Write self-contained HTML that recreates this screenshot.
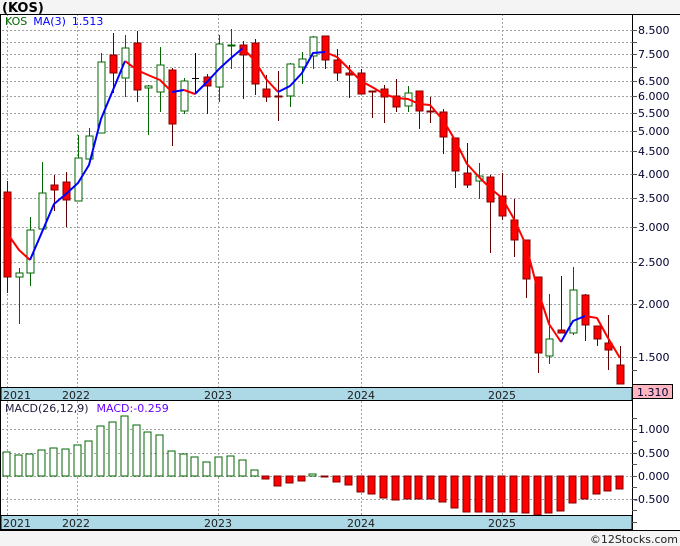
<!DOCTYPE html>
<html><head><meta charset="utf-8"><style>
html,body{margin:0;padding:0;background:#f4f4f4;}
svg{display:block;font-family:"DejaVu Sans","Liberation Sans",sans-serif;}
</style></head><body>
<svg width="680" height="546" viewBox="0 0 680 546" xmlns="http://www.w3.org/2000/svg">
<rect x="0" y="0" width="680" height="546" fill="#f4f4f4"/>
<text x="2" y="12" font-size="13" font-weight="bold" fill="#000">(KOS)</text>
<rect x="0" y="14" width="680" height="516" fill="#fff"/>
<g stroke="#a0a0a0" stroke-dasharray="2,2" stroke-width="1">
<line x1="2" x2="632" y1="30.5" y2="30.5"/><line x1="2" x2="632" y1="42.5" y2="42.5"/><line x1="2" x2="632" y1="54.5" y2="54.5"/><line x1="2" x2="632" y1="67.5" y2="67.5"/><line x1="2" x2="632" y1="81.5" y2="81.5"/><line x1="2" x2="632" y1="96.5" y2="96.5"/><line x1="2" x2="632" y1="113.5" y2="113.5"/><line x1="2" x2="632" y1="131.5" y2="131.5"/><line x1="2" x2="632" y1="151.5" y2="151.5"/><line x1="2" x2="632" y1="174.5" y2="174.5"/><line x1="2" x2="632" y1="198.5" y2="198.5"/><line x1="2" x2="632" y1="227.5" y2="227.5"/><line x1="2" x2="632" y1="262.5" y2="262.5"/><line x1="2" x2="632" y1="304.5" y2="304.5"/><line x1="2" x2="632" y1="357.5" y2="357.5"/>
<line x1="2" x2="632" y1="429.5" y2="429.5"/><line x1="2" x2="632" y1="453.5" y2="453.5"/><line x1="2" x2="632" y1="476.5" y2="476.5"/><line x1="2" x2="632" y1="499.5" y2="499.5"/>
<line x1="7.5" x2="7.5" y1="14" y2="387"/><line x1="77.5" x2="77.5" y1="14" y2="387"/><line x1="218.5" x2="218.5" y1="14" y2="387"/><line x1="361.5" x2="361.5" y1="14" y2="387"/><line x1="502.5" x2="502.5" y1="14" y2="387"/>
<line x1="7.5" x2="7.5" y1="401" y2="515"/><line x1="77.5" x2="77.5" y1="401" y2="515"/><line x1="218.5" x2="218.5" y1="401" y2="515"/><line x1="361.5" x2="361.5" y1="401" y2="515"/><line x1="502.5" x2="502.5" y1="401" y2="515"/>
</g>
<text x="5" y="25" font-size="11"><tspan fill="#006400">KOS</tspan><tspan fill="#0000ff" dx="6">MA(3)</tspan><tspan fill="#0000ff" dx="6">1.513</tspan></text>
<text x="5" y="412" font-size="11"><tspan fill="#202040">MACD(26,12,9)</tspan><tspan fill="#6600ff" dx="8">MACD:-0.259</tspan></text>
<g stroke-width="1">
<g stroke="#600000"><line x1="7.5" x2="7.5" y1="181" y2="293"/><line x1="54.5" x2="54.5" y1="175" y2="211"/><line x1="66.5" x2="66.5" y1="172" y2="227"/><line x1="113.5" x2="113.5" y1="33" y2="93"/><line x1="137.5" x2="137.5" y1="31" y2="102"/><line x1="172.5" x2="172.5" y1="68" y2="146"/><line x1="207.5" x2="207.5" y1="74" y2="114"/><line x1="243.5" x2="243.5" y1="41" y2="99"/><line x1="255.5" x2="255.5" y1="39" y2="95"/><line x1="266.5" x2="266.5" y1="75" y2="102"/><line x1="278.5" x2="278.5" y1="71" y2="121"/><line x1="325.5" x2="325.5" y1="36" y2="69"/><line x1="337.5" x2="337.5" y1="49" y2="81"/><line x1="349.5" x2="349.5" y1="65" y2="98"/><line x1="361.5" x2="361.5" y1="69" y2="94"/><line x1="372.5" x2="372.5" y1="91" y2="118"/><line x1="384.5" x2="384.5" y1="85" y2="123"/><line x1="396.5" x2="396.5" y1="79" y2="112"/><line x1="419.5" x2="419.5" y1="91" y2="129"/><line x1="430.5" x2="430.5" y1="97" y2="123"/><line x1="443.5" x2="443.5" y1="109" y2="154"/><line x1="455.5" x2="455.5" y1="138" y2="188"/><line x1="467.5" x2="467.5" y1="143" y2="188"/><line x1="490.5" x2="490.5" y1="175" y2="253"/><line x1="502.5" x2="502.5" y1="173" y2="220"/><line x1="514.5" x2="514.5" y1="199" y2="257"/><line x1="526.5" x2="526.5" y1="240" y2="298"/><line x1="538.5" x2="538.5" y1="277" y2="373"/><line x1="561.5" x2="561.5" y1="276" y2="333"/><line x1="585.5" x2="585.5" y1="294" y2="341"/><line x1="597.5" x2="597.5" y1="326" y2="346"/><line x1="608.5" x2="608.5" y1="315" y2="370"/><line x1="620.5" x2="620.5" y1="346" y2="384"/></g>
<g stroke="#006400"><line x1="19.5" x2="19.5" y1="268" y2="324"/><line x1="30.5" x2="30.5" y1="217" y2="286"/><line x1="42.5" x2="42.5" y1="162" y2="229"/><line x1="78.5" x2="78.5" y1="135" y2="201"/><line x1="89.5" x2="89.5" y1="128" y2="159"/><line x1="101.5" x2="101.5" y1="53" y2="133"/><line x1="125.5" x2="125.5" y1="35" y2="97"/><line x1="148.5" x2="148.5" y1="85" y2="135"/><line x1="160.5" x2="160.5" y1="47" y2="112"/><line x1="184.5" x2="184.5" y1="78" y2="114"/><line x1="219.5" x2="219.5" y1="35" y2="102"/><line x1="231.5" x2="231.5" y1="29" y2="69"/><line x1="290.5" x2="290.5" y1="63" y2="107"/><line x1="302.5" x2="302.5" y1="52" y2="84"/><line x1="313.5" x2="313.5" y1="36" y2="69"/><line x1="408.5" x2="408.5" y1="86" y2="112"/><line x1="479.5" x2="479.5" y1="163" y2="199"/><line x1="549.5" x2="549.5" y1="294" y2="364"/><line x1="573.5" x2="573.5" y1="267" y2="335"/></g>
<line x1="195.5" x2="195.5" y1="53" y2="93" stroke="#000"/><line x1="192" x2="199" y1="78.5" y2="78.5" stroke="#000"/>
<g fill="#ff0000" stroke="#800000"><rect x="4" y="192" width="7" height="85"/><rect x="51" y="185" width="7" height="5"/><rect x="63" y="182" width="7" height="18"/><rect x="110" y="55" width="7" height="18"/><rect x="134" y="43" width="7" height="47"/><rect x="169" y="70" width="7" height="54"/><rect x="204" y="77" width="7" height="9"/><rect x="240" y="45" width="7" height="10"/><rect x="252" y="43" width="7" height="41"/><rect x="263" y="89" width="7" height="8"/><rect x="275" y="96" width="7" height="1"/><rect x="322" y="36" width="7" height="24"/><rect x="334" y="60" width="7" height="13"/><rect x="346" y="73" width="7" height="2"/><rect x="358" y="73" width="7" height="21"/><rect x="369" y="91" width="7" height="1"/><rect x="381" y="89" width="7" height="8"/><rect x="393" y="96" width="7" height="11"/><rect x="416" y="91" width="7" height="20"/><rect x="427" y="111" width="7" height="1"/><rect x="440" y="112" width="7" height="25"/><rect x="452" y="138" width="7" height="33"/><rect x="464" y="173" width="7" height="12"/><rect x="487" y="177" width="7" height="25"/><rect x="499" y="196" width="7" height="20"/><rect x="511" y="220" width="7" height="20"/><rect x="523" y="240" width="7" height="39"/><rect x="535" y="277" width="7" height="76"/><rect x="558" y="330" width="7" height="3"/><rect x="582" y="295" width="7" height="30"/><rect x="594" y="326" width="7" height="13"/><rect x="605" y="343" width="7" height="7"/><rect x="617" y="365" width="7" height="19"/></g>
<g fill="#fff" stroke="#006400"><rect x="16" y="273" width="7" height="4"/><rect x="27" y="230" width="7" height="43"/><rect x="39" y="193" width="7" height="36"/><rect x="75" y="158" width="7" height="43"/><rect x="86" y="136" width="7" height="23"/><rect x="98" y="62" width="7" height="71"/><rect x="122" y="48" width="7" height="30"/><rect x="145" y="86" width="7" height="2"/><rect x="157" y="65" width="7" height="27"/><rect x="181" y="81" width="7" height="30"/><rect x="216" y="44" width="7" height="43"/><rect x="228" y="45" width="7" height="1"/><rect x="287" y="64" width="7" height="32"/><rect x="299" y="59" width="7" height="8"/><rect x="310" y="37" width="7" height="19"/><rect x="405" y="93" width="7" height="13"/><rect x="476" y="176" width="7" height="5"/><rect x="546" y="339" width="7" height="17"/><rect x="570" y="290" width="7" height="43"/></g>
</g>
<g fill="none" stroke-width="2" stroke-linejoin="round">
<polyline stroke="#ff0000" points="7,233 19,250 30,260"/>
<polyline stroke="#0000ff" points="30,260 42,232 54,204 66,194 78,183 89,165 101,119 113,90 125,61"/>
<polyline stroke="#ff0000" points="125,61 137,70 148,75 160,80 172,92"/>
<polyline stroke="#0000ff" points="172,92 184,90"/>
<polyline stroke="#ff0000" points="184,90 195,94"/>
<polyline stroke="#0000ff" points="195,94 207,82 219,69 231,58 243,48"/>
<polyline stroke="#ff0000" points="243,48 255,61 266,79 278,92"/>
<polyline stroke="#0000ff" points="278,92 290,86 302,73 313,53 325,52"/>
<polyline stroke="#ff0000" points="325,52 337,57 349,69 361,81 372,87 384,94 396,98 408,99 419,104 430,105 443,120 455,140 467,164 479,177 490,188 502,198 514,219 526,245 538,291 549,324 561,342"/>
<polyline stroke="#0000ff" points="561,342 573,321 585,316"/>
<polyline stroke="#ff0000" points="585,316 597,318 608,338 620,358"/>
</g>
<g fill="#fff" stroke="#006400">
<rect x="3" y="452" width="7" height="24"/><rect x="15" y="455" width="7" height="21"/><rect x="26" y="454" width="7" height="22"/><rect x="38" y="450" width="7" height="26"/><rect x="50" y="448" width="7" height="28"/><rect x="62" y="449" width="7" height="27"/><rect x="74" y="445" width="7" height="31"/><rect x="85" y="441" width="7" height="35"/><rect x="97" y="426" width="7" height="50"/><rect x="109" y="422" width="7" height="54"/><rect x="121" y="416" width="7" height="60"/><rect x="133" y="425" width="7" height="51"/><rect x="144" y="432" width="7" height="44"/><rect x="156" y="435" width="7" height="41"/><rect x="168" y="451" width="7" height="25"/><rect x="180" y="454" width="7" height="22"/><rect x="191" y="457" width="7" height="19"/><rect x="203" y="462" width="7" height="14"/><rect x="215" y="457" width="7" height="19"/><rect x="227" y="456" width="7" height="20"/><rect x="239" y="460" width="7" height="16"/><rect x="251" y="470" width="7" height="6"/><rect x="309" y="474" width="7" height="2"/>
</g>
<g fill="#ff0000" stroke="#800000">
<rect x="262" y="476" width="7" height="3"/><rect x="274" y="476" width="7" height="10"/><rect x="286" y="476" width="7" height="7"/><rect x="298" y="476" width="7" height="5"/><rect x="321" y="476" width="7" height="1"/><rect x="333" y="476" width="7" height="6"/><rect x="345" y="476" width="7" height="9"/><rect x="357" y="476" width="7" height="16"/><rect x="368" y="476" width="7" height="18"/><rect x="380" y="476" width="7" height="22"/><rect x="392" y="476" width="7" height="24"/><rect x="404" y="476" width="7" height="23"/><rect x="415" y="476" width="7" height="23"/><rect x="427" y="476" width="7" height="23"/><rect x="439" y="476" width="7" height="26"/><rect x="451" y="476" width="7" height="32"/><rect x="463" y="476" width="7" height="36"/><rect x="475" y="476" width="7" height="36"/><rect x="486" y="476" width="7" height="36"/><rect x="498" y="476" width="7" height="36"/><rect x="510" y="476" width="7" height="36"/><rect x="522" y="476" width="7" height="37"/><rect x="534" y="476" width="7" height="39"/><rect x="545" y="476" width="7" height="37"/><rect x="557" y="476" width="7" height="35"/><rect x="569" y="476" width="7" height="27"/><rect x="581" y="476" width="7" height="23"/><rect x="593" y="476" width="7" height="18"/><rect x="604" y="476" width="7" height="15"/><rect x="616" y="476" width="7" height="13"/>
</g>
<rect x="1" y="387.5" width="631" height="13" fill="#add8e6" stroke="#000"/>
<rect x="1" y="515.5" width="631" height="14" fill="#add8e6" stroke="#000"/>
<g font-size="11" fill="#202020">
<text x="3" y="399">2021</text><text x="62" y="399">2022</text><text x="204" y="399">2023</text><text x="347" y="399">2024</text><text x="488" y="399">2025</text>
<text x="3" y="527">2021</text><text x="62" y="527">2022</text><text x="204" y="527">2023</text><text x="347" y="527">2024</text><text x="488" y="527">2025</text>
</g>
<line x1="0" x2="680" y1="14.5" y2="14.5" stroke="#000"/>
<line x1="0.5" x2="0.5" y1="14" y2="530" stroke="#000"/>
<line x1="632.5" x2="632.5" y1="14" y2="530" stroke="#000"/>
<line x1="0" x2="680" y1="530.5" y2="530.5" stroke="#000"/>
<g stroke="#555">
<line x1="632" x2="637" y1="30.5" y2="30.5"/><line x1="632" x2="637" y1="42.5" y2="42.5"/><line x1="632" x2="637" y1="54.5" y2="54.5"/><line x1="632" x2="637" y1="67.5" y2="67.5"/><line x1="632" x2="637" y1="81.5" y2="81.5"/><line x1="632" x2="637" y1="96.5" y2="96.5"/><line x1="632" x2="637" y1="113.5" y2="113.5"/><line x1="632" x2="637" y1="131.5" y2="131.5"/><line x1="632" x2="637" y1="151.5" y2="151.5"/><line x1="632" x2="637" y1="174.5" y2="174.5"/><line x1="632" x2="637" y1="198.5" y2="198.5"/><line x1="632" x2="637" y1="227.5" y2="227.5"/><line x1="632" x2="637" y1="262.5" y2="262.5"/><line x1="632" x2="637" y1="304.5" y2="304.5"/><line x1="632" x2="637" y1="357.5" y2="357.5"/><line x1="632" x2="637" y1="370.5" y2="370.5"/>
<line x1="632" x2="637" y1="418.5" y2="418.5"/><line x1="632" x2="637" y1="429.5" y2="429.5"/><line x1="632" x2="637" y1="441.5" y2="441.5"/><line x1="632" x2="637" y1="453.5" y2="453.5"/><line x1="632" x2="637" y1="464.5" y2="464.5"/><line x1="632" x2="637" y1="476.5" y2="476.5"/><line x1="632" x2="637" y1="487.5" y2="487.5"/><line x1="632" x2="637" y1="499.5" y2="499.5"/><line x1="632" x2="637" y1="510.5" y2="510.5"/><line x1="632" x2="637" y1="522.5" y2="522.5"/>
</g>
<g font-size="11" fill="#000033">
<text x="638" y="34">8.500</text><text x="638" y="58">7.500</text><text x="638" y="85">6.500</text><text x="638" y="100">6.000</text><text x="638" y="117">5.500</text><text x="638" y="135">5.000</text><text x="638" y="155">4.500</text><text x="638" y="178">4.000</text><text x="638" y="202">3.500</text><text x="638" y="231">3.000</text><text x="638" y="266">2.500</text><text x="638" y="308">2.000</text><text x="638" y="361">1.500</text>
<text x="638" y="433">1.000</text><text x="638" y="457">0.500</text><text x="638" y="480">0.000</text><text x="634" y="503">-0.500</text>
</g>
<rect x="632.5" y="384.5" width="40" height="14" fill="#ffb6c1" stroke="#000"/>
<text x="637" y="396" font-size="11" fill="#000033">1.310</text>
<text x="678" y="543" font-size="11" fill="#222" text-anchor="end">©12Stocks.com</text>
</svg>
</body></html>
